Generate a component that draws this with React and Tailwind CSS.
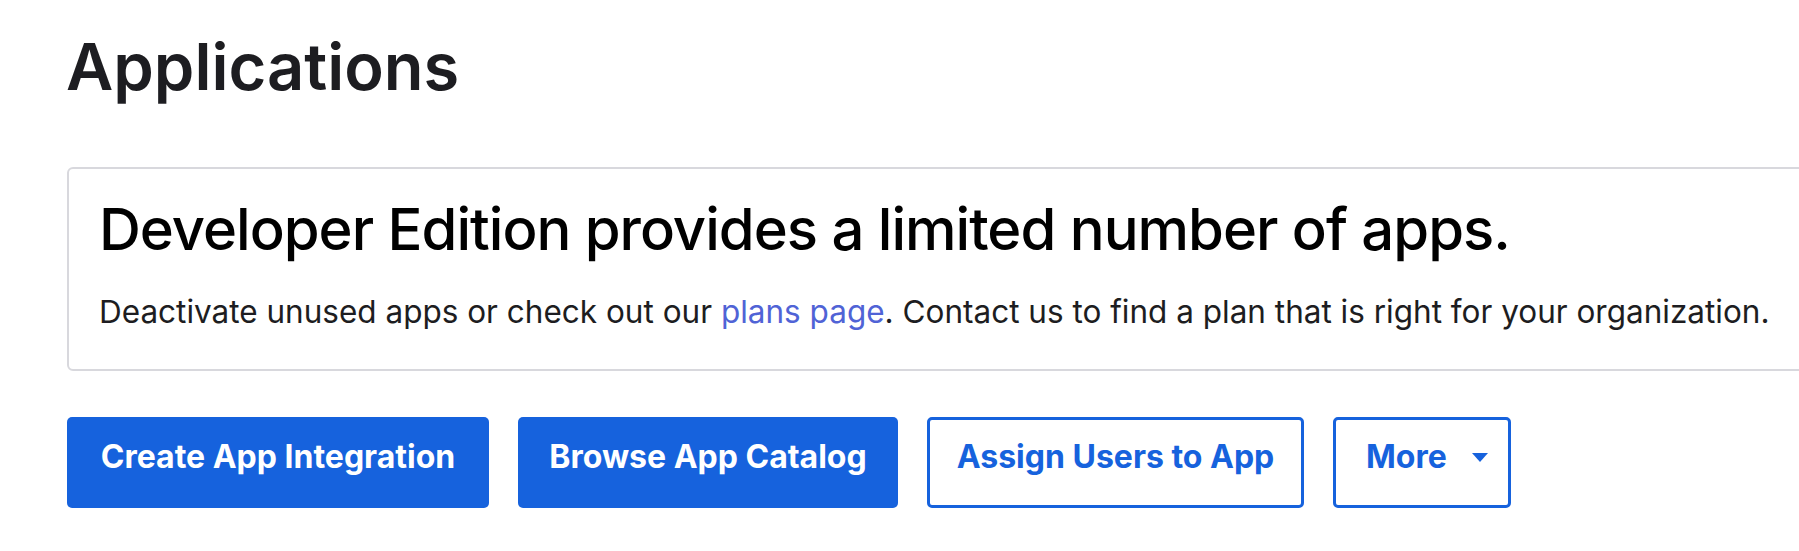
import React from "react";

const buttons = [
  { label: "Create App Integration", kind: "primary", w: "w-[422px]" },
  { label: "Browse App Catalog", kind: "primary", w: "w-[380px]" },
  { label: "Assign Users to App", kind: "outline", w: "w-[377px]" },
];

const Caret = () => (
  <svg width="16" height="9" viewBox="0 0 16 9" className="ml-[25px]" aria-hidden="true">
    <path d="M0 0h16L8 9z" fill="#1662dd" />
  </svg>
);

const App = () => {
  return (
    <div className="w-[1799px] h-[551px] overflow-hidden bg-white font-['Inter','Noto_Sans',sans-serif]">
      <main className="pl-[67px] pt-[34px]">
        <h1 className="text-[65px] leading-none font-semibold text-[#1d1d21] -ml-[1px]">
          Applications
        </h1>

        <section className="mt-[68px] mr-[-60px] border-2 border-[#d8d8dd] rounded-[6px] pl-[30px] pt-[31px] pb-[41px]">
          <h2 className="text-[58px] leading-none font-medium tracking-[-1px] text-black">
            Developer Edition provides a limited number of apps.
          </h2>
          <p className="mt-[38px] text-[31.5px] leading-none text-[#1d1d21]">
            Deactivate unused apps or check out our{" "}
            <a href="#" className="text-[#5063d6]">
              plans page
            </a>
            . Contact us to find a plan that is right for your organization.
          </p>
        </section>

        <div className="mt-[46px] flex items-center gap-[29px]">
          {buttons.map((b) => (
            <button
              key={b.label}
              className={
                b.kind === "primary"
                  ? "h-[91px] pb-[10px] rounded-[5px] bg-[#1662dd] text-white text-[32px] font-bold flex items-center justify-center " + b.w
                  : "h-[91px] pb-[10px] rounded-[5px] bg-white border-[3px] border-[#1662dd] text-[#1662dd] text-[32px] font-bold flex items-center justify-center " + b.w
              }
            >
              {b.label}
            </button>
          ))}
          <button className="h-[91px] w-[178px] pb-[10px] pl-[30px] rounded-[5px] bg-white border-[3px] border-[#1662dd] text-[#1662dd] text-[32px] font-bold flex items-center">
            More
            <Caret />
          </button>
        </div>
      </main>
    </div>
  );
};

export default App;
